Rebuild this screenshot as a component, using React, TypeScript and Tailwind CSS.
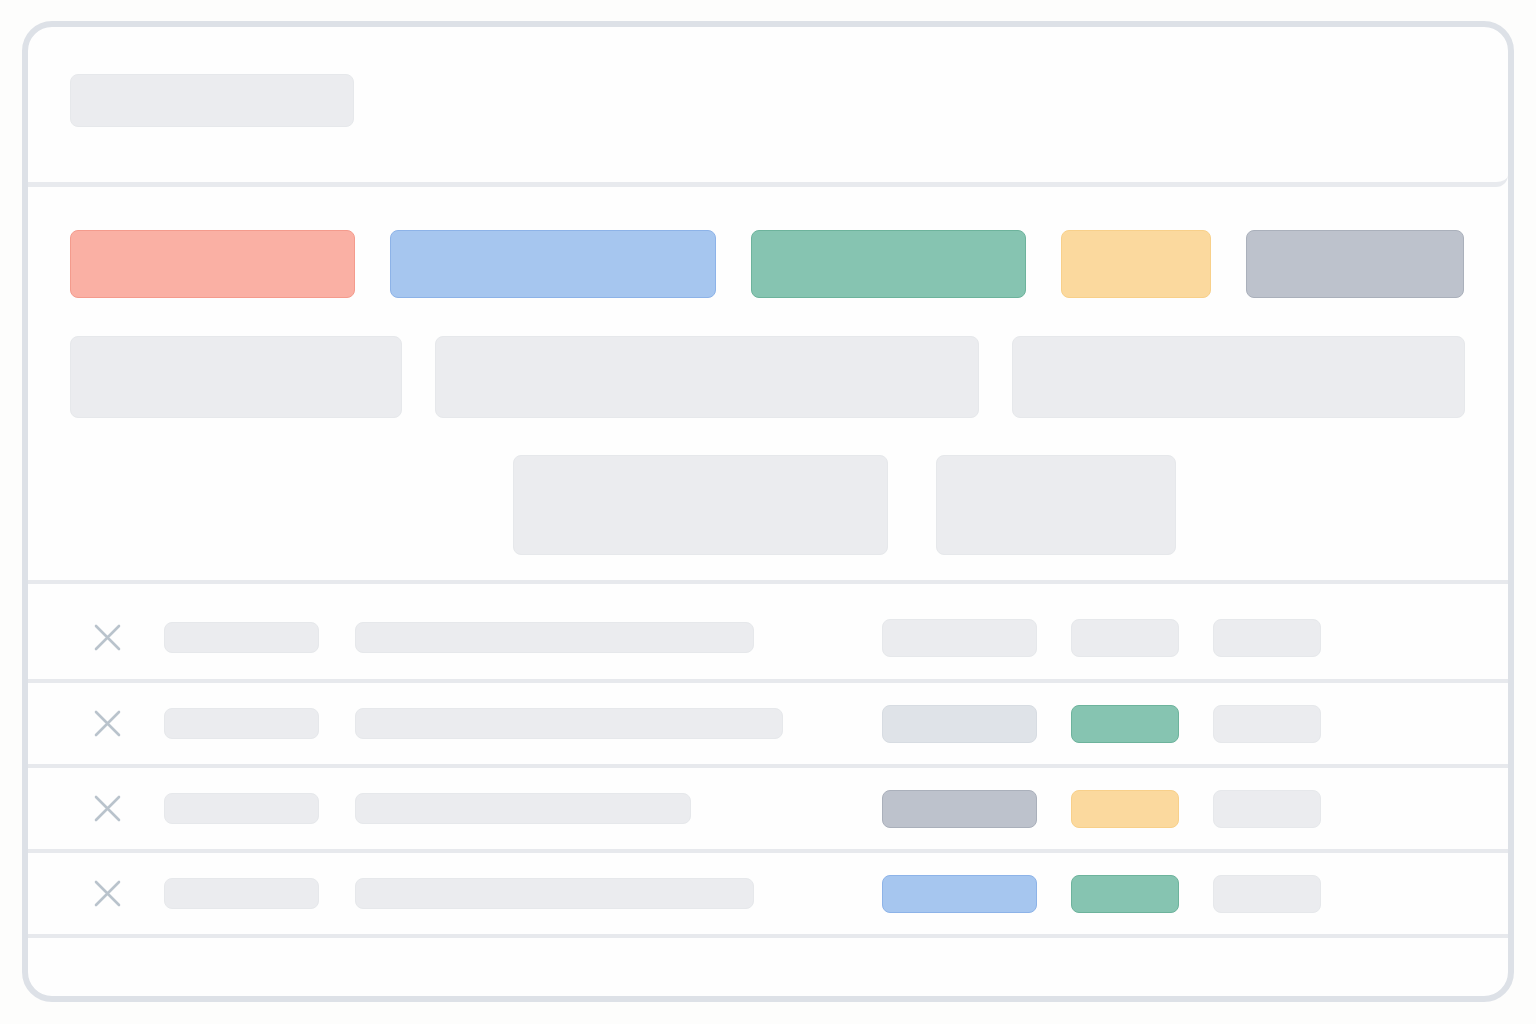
import React from 'react';

type Tone = 'light' | 'slate' | 'gray' | 'red' | 'blue' | 'green' | 'yellow';

const toneClass: Record<Tone, string> = {
  light: 'bg-[#ebecef] border-[#e6e8eb]',
  slate: 'bg-[#dfe3e8] border-[#d7dce2]',
  gray: 'bg-[#bdc2cc] border-[#aab0bb]',
  red: 'bg-[#fab0a4] border-[#f49b8d]',
  blue: 'bg-[#a6c6ef] border-[#8db3e8]',
  green: 'bg-[#86c4b1] border-[#6db39c]',
  yellow: 'bg-[#fbd99e] border-[#f8d08a]',
};

function Block({ tone = 'light', className = '' }: { tone?: Tone; className?: string }) {
  return <div className={`rounded-lg border shrink-0 ${toneClass[tone]} ${className}`} />;
}

function CloseIcon() {
  return (
    <svg width="27" height="27" viewBox="0 0 27 27" fill="none" className="shrink-0">
      <path d="M2 2L25 25M25 2L2 25" stroke="#b9c3cc" strokeWidth="2.6" strokeLinecap="round" />
    </svg>
  );
}

const rows: { bar: string; status: Tone; tag: Tone; tall?: boolean }[] = [
  { bar: 'w-[399px]', status: 'light', tag: 'light', tall: true },
  { bar: 'w-[428px]', status: 'slate', tag: 'green' },
  { bar: 'w-[336px]', status: 'gray', tag: 'yellow' },
  { bar: 'w-[399px]', status: 'blue', tag: 'green' },
];

export default function App() {
  return (
    <div className="min-h-[1024px] bg-[#fdfdfc] pt-[21px] px-[22px]">
      <div className="w-[1492px] h-[981px] rounded-[30px] border-[6px] border-[#dde1e7] bg-[#fefefe] overflow-hidden flex flex-col">
        {/* Header */}
        <div className="h-[160px] border-b-[5px] border-[#e8eaee] rounded-br-xl pl-[42px] pt-[47px] shrink-0">
          <Block className="w-[284px] h-[53px]" />
        </div>

        {/* Filter area */}
        <div className="px-[42px] pt-[43px] pb-[25px] border-b-4 border-[#e7e9ed] flex flex-col">
          <div className="flex gap-[35px]">
            <Block tone="red" className="w-[285px] h-[68px]" />
            <Block tone="blue" className="w-[326px] h-[68px]" />
            <Block tone="green" className="w-[275px] h-[68px]" />
            <Block tone="yellow" className="w-[150px] h-[68px]" />
            <Block tone="gray" className="w-[218px] h-[68px]" />
          </div>
          <div className="flex gap-[33px] mt-[38px]">
            <Block className="w-[332px] h-[82px]" />
            <Block className="w-[544px] h-[82px]" />
            <Block className="w-[453px] h-[82px]" />
          </div>
          <div className="flex gap-[48px] mt-[37px] pl-[443px]">
            <Block className="w-[375px] h-[100px] rounded-[10px]" />
            <Block className="w-[240px] h-[100px] rounded-[10px]" />
          </div>
        </div>

        {/* Table rows */}
        {rows.map((r, i) => (
          <div
            key={i}
            className={`flex items-center border-b-4 border-[#e7e9ed] pl-[66px] shrink-0 ${r.tall ? 'h-[99px] pt-3' : 'h-[85px]'}`}
          >
            <CloseIcon />
            <Block className="ml-[43px] w-[155px] h-[31px]" />
            <div className="ml-[36px] w-[527px] shrink-0">
              <Block className={`${r.bar} h-[31px]`} />
            </div>
            <Block tone={r.status} className="w-[155px] h-[38px]" />
            <Block tone={r.tag} className="ml-[34px] w-[108px] h-[38px]" />
            <Block className="ml-[34px] w-[108px] h-[38px]" />
          </div>
        ))}
      </div>
    </div>
  );
}
